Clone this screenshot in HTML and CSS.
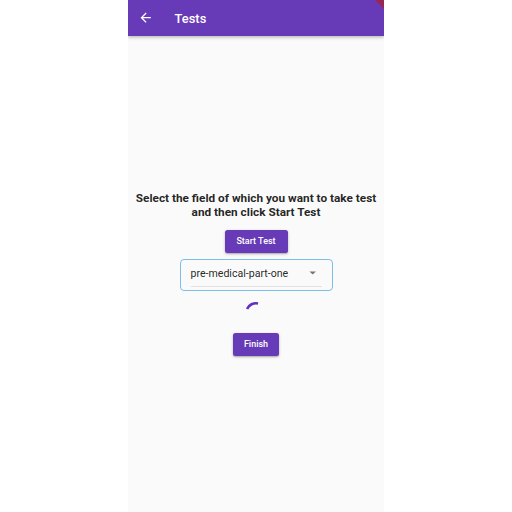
FILE: index.html
```html
<!DOCTYPE html>
<html>
<head>
<meta charset="utf-8">
<link rel="stylesheet" href="styles.css">
</head>
<body>
<div class="phone">
  <header class="appbar">
    <svg class="back" viewBox="0 0 24 24" width="15.4" height="15.4"><path d="M20 11H7.83l5.59-5.59L12 4l-8 8 8 8 1.41-1.41L7.83 13H20v-2z" fill="#fff"/></svg>
    <div class="title">Tests</div>
  </header>
  <main class="content">
    <p class="prompt">Select the field of which you want to take test and then click Start Test</p>
    <button class="btn btn-start">Start Test</button>
    <div class="dropdown">
      <div class="select">
        <span class="value">pre-medical-part-one</span>
        <svg class="caret" viewBox="0 0 24 24" width="15.4" height="15.4"><path d="M7 10l5 5 5-5z" fill="#757575"/></svg>
      </div>
    </div>
    <div class="spinner">
      <svg viewBox="0 0 24 24" width="24" height="24"><path d="M3.05 8.01 A9.8 9.8 0 0 1 14.04 2.41" fill="none" stroke="#5f33bd" stroke-width="2.6"/></svg>
    </div>
    <button class="btn btn-finish">Finish</button>
  </main>
  <div class="banner"></div>
</div>
</body>
</html>
```
FILE: styles.css
```css
html, body {
  margin: 0;
  padding: 0;
  background: #ffffff;
}
.phone {
  position: relative;
  width: 256px;
  height: 512px;
  margin: 0 auto;
  background: #fafafa;
  display: flex;
  flex-direction: column;
  overflow: hidden;
  font-family: Roboto, "Liberation Sans", sans-serif;
}
.appbar {
  height: 36px;
  flex: 0 0 36px;
  background: #673ab7;
  display: flex;
  align-items: center;
  box-shadow: 0 1px 3px rgba(0,0,0,0.22), 0 2px 4px rgba(0,0,0,0.08);
  position: relative;
  z-index: 1;
}
.back {
  margin-left: 10px;
  display: block;
}
.title {
  margin-left: 21px;
  color: #fff;
  font-size: 12.8px;
  font-weight: 500;
  letter-spacing: 0.1px;
}
.content {
  flex: 1;
  display: flex;
  flex-direction: column;
  align-items: center;
  justify-content: center;
}
.prompt {
  margin: 0;
  padding: 0 4px;
  text-align: center;
  font-size: 11.8px;
  line-height: 13.5px;
  font-weight: 700;
  color: rgba(0,0,0,0.87);
}
.btn {
  border: none;
  background: #673ab7;
  color: #fff;
  font-family: Roboto, "Liberation Sans", sans-serif;
  font-size: 9px;
  font-weight: 500;
  height: 23px;
  padding: 0 10px;
  border-radius: 2.5px;
  box-shadow: 0 1px 3px rgba(0,0,0,0.25), 0 1px 1px rgba(0,0,0,0.12);
}
.btn-start {
  margin-top: 10.5px;
  width: 63px;
}
.dropdown {
  margin-top: 6px;
  width: 153px;
  height: 32px;
  box-sizing: border-box;
  border: 1px solid #7dbde9;
  border-radius: 4px;
  padding: 0 10px 0 10px;
}
.select {
  height: 26.5px;
  border-bottom: 1px solid #e3e3e3;
  display: flex;
  align-items: center;
  justify-content: space-between;
}
.value {
  font-size: 10.6px;
  color: rgba(0,0,0,0.87);
}
.caret {
  display: block;
  margin-right: 1px;
}
.spinner {
  margin-top: 10.5px;
  width: 24px;
  height: 24px;
}
.spinner svg {
  display: block;
}
.btn-finish {
  margin-top: 7.5px;
  width: 46px;
}
.banner {
  position: absolute;
  top: 0;
  right: 0;
  width: 9px;
  height: 9px;
  background: #992756;
  clip-path: polygon(0 0, 100% 0, 100% 100%);
  z-index: 2;
}
```
